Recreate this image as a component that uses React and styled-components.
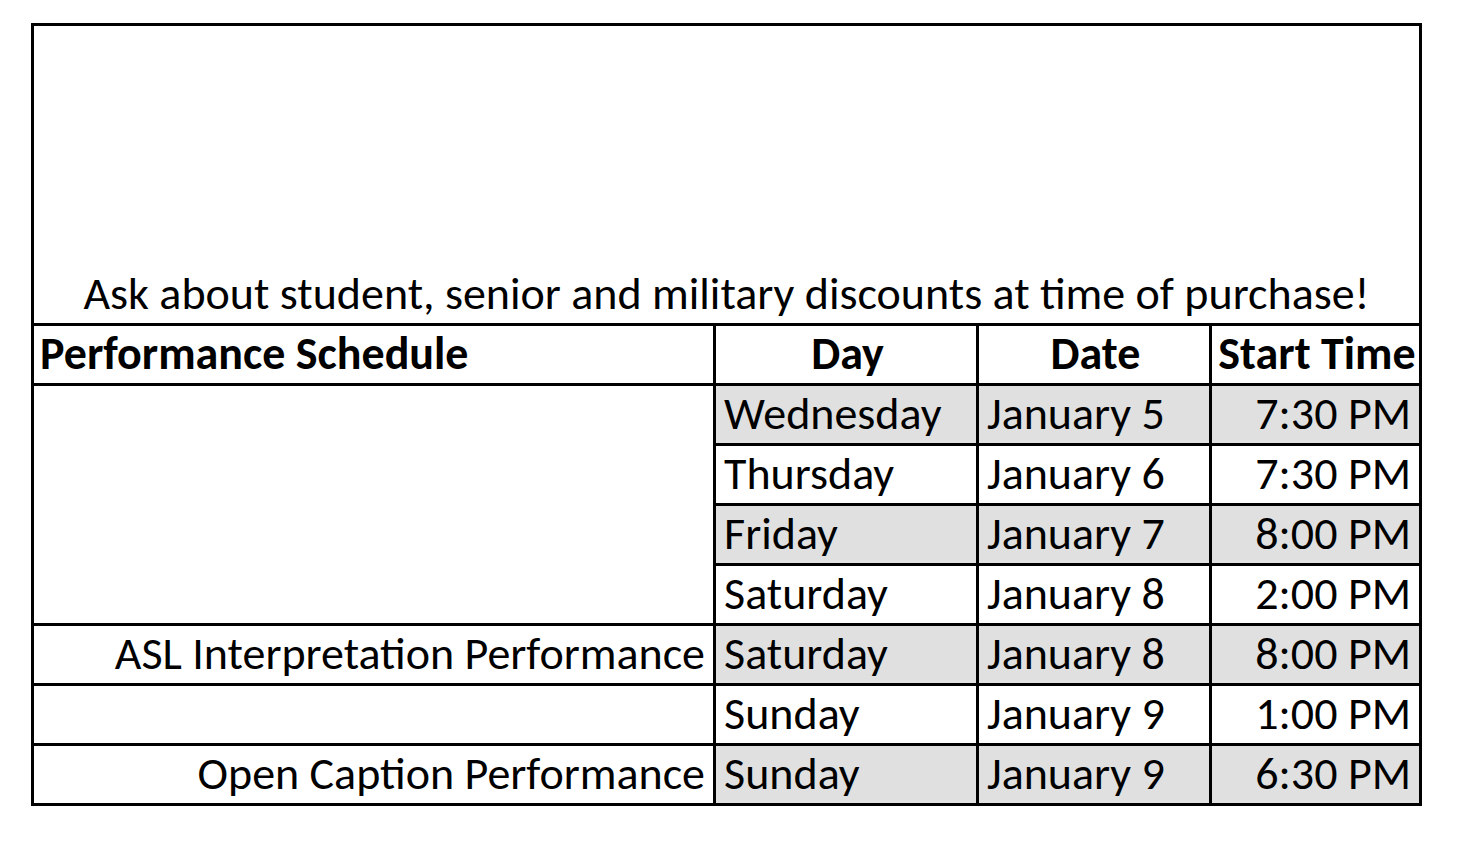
import React from 'react';
import styled, { createGlobalStyle } from 'styled-components';

const GlobalStyle = createGlobalStyle`
  html, body {
    margin: 0;
    padding: 0;
    background: #fff;
  }
  body {
    font-family: Carlito, Lato, "Liberation Sans", sans-serif;
    color: #000;
  }
`;

const rows = [
  { day: 'Wednesday', date: 'January 5', time: '7:30 PM' },
  { day: 'Thursday', date: 'January 6', time: '7:30 PM' },
  { day: 'Friday', date: 'January 7', time: '8:00 PM' },
  { day: 'Saturday', date: 'January 8', time: '2:00 PM' },
  { day: 'Saturday', date: 'January 8', time: '8:00 PM', label: 'ASL Interpretation Performance' },
  { day: 'Sunday', date: 'January 9', time: '1:00 PM', label: '' },
  { day: 'Sunday', date: 'January 9', time: '6:30 PM', label: 'Open Caption Performance' },
];

const App = () => (
  <Page>
    <GlobalStyle />
    <Sheet>
      <Banner>Ask about student, senior and military discounts at time of purchase!</Banner>
      <Head align="left">Performance Schedule</Head>
      <Head>Day</Head>
      <Head>Date</Head>
      <Head>Start Time</Head>
      <Label span={4} />
      {rows.map((r, i) => (
        <React.Fragment key={i}>
          {r.label !== undefined && <Label>{r.label}</Label>}
          <Cell shaded={i % 2 === 0}>{r.day}</Cell>
          <Cell shaded={i % 2 === 0}>{r.date}</Cell>
          <Cell shaded={i % 2 === 0} align="right">{r.time}</Cell>
        </React.Fragment>
      ))}
    </Sheet>
  </Page>
);

const Page = styled.div`
  padding: 23px 0 0 31px;
`;

const Sheet = styled.div`
  display: grid;
  grid-template-columns: 679px 260px 230px 207px;
  grid-template-rows: 297px repeat(8, 57px);
  gap: 3px;
  padding: 3px;
  width: max-content;
  background: #000;
`;

const Base = styled.div`
  background: #fff;
  display: flex;
  align-items: flex-end;
  padding: 0 8px 7px;
  font-size: 46px;
  line-height: 1;
  white-space: nowrap;
  overflow: hidden;
`;

const Banner = styled(Base)`
  grid-column: 1 / -1;
  justify-content: center;
  padding-bottom: 7px;
`;

const Head = styled(Base)`
  font-weight: 700;
  justify-content: ${p => (p.align === 'left' ? 'flex-start' : 'center')};
  padding-left: 6px;
  padding-right: 3px;
`;

const Label = styled(Base)`
  justify-content: flex-end;
  grid-row: ${p => (p.span ? `span ${p.span}` : 'auto')};
`;

const Cell = styled(Base)`
  background: ${p => (p.shaded ? '#e0e0e0' : '#fff')};
  justify-content: ${p => (p.align === 'right' ? 'flex-end' : 'flex-start')};
`;

export default App;
